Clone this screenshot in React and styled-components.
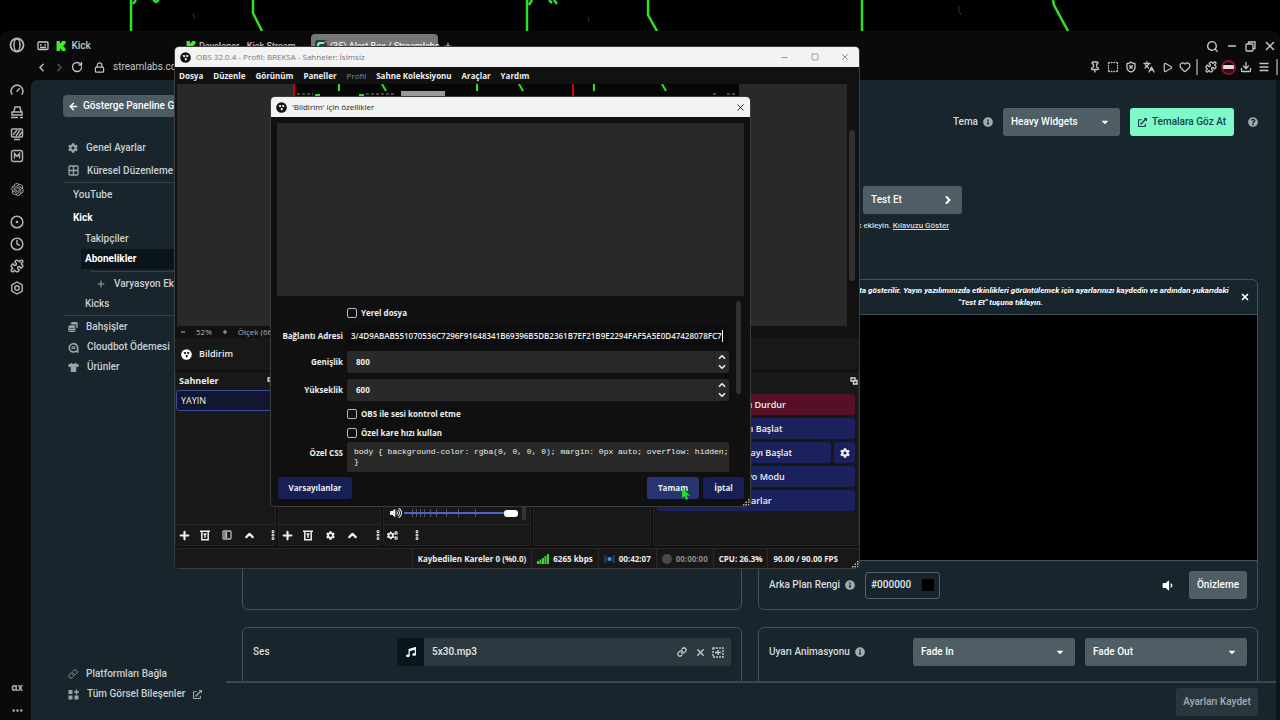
import { useEffect, useRef, useState } from 'react'
import styled, { createGlobalStyle, css } from 'styled-components'
import {
    ArrowLeft,
    ChevronDown,
    ChevronLeft,
    ChevronRight,
    ChevronUp,
    CircleDot,
    Clock,
    Download,
    Ellipsis,
    EllipsisVertical,
    Gauge,
    Heart,
    Languages,
    Link,
    Lock,
    Menu as MenuIcon,
    Minus,
    Pin,
    Play,
    Plus,
    Puzzle,
    RotateCw,
    Search,
    ShieldX,
    Square,
    SquareDashed,
    X,
} from 'lucide-react'
import {
    FaCaretDown,
    FaCog,
    FaCogs,
    FaCoins,
    FaExternalLinkAlt,
    FaInfoCircle,
    FaMusic,
    FaQuestionCircle,
    FaTshirt,
    FaVolumeDown,
    FaVolumeUp,
} from 'react-icons/fa'
import { RiOpenaiFill } from 'react-icons/ri'
import { SiKick } from 'react-icons/si'

const OBS_FONT = "'Open Sans', 'Noto Sans', sans-serif"
const PAGE_FONT = "Roboto, 'Noto Sans', sans-serif"

const SOURCE_URL =
    'https://streamlabs.com/alert-box/v3/4D9ABAB551070536C7296F91648341B69396B5DB2361B7EF21B9E2294FAF5A5E0D47428078FC7'

const MENUS = [
    'Dosya',
    'Düzenle',
    'Görünüm',
    'Paneller',
    'Profil',
    'Sahne Koleksiyonu',
    'Araçlar',
    'Yardım',
]

const SLIDER_TICKS = [8, 12, 16, 20, 26, 32, 42, 54, 71]

const GlobalStyle = createGlobalStyle`
    * {
        box-sizing: border-box;
    }

    body {
        margin: 0;
        background: #000;
        overflow: hidden;
    }

    button, input, select, textarea {
        font: inherit;
        color: inherit;
        margin: 0;
    }

    svg {
        flex: none;
        display: block;
    }
`

const Desktop = styled.div`
    position: relative;
    display: flex;
    flex-direction: column;
    height: 100vh;
    overflow: hidden;
    background: #000;
    font-family: ${PAGE_FONT};
    font-size: 10px;
    line-height: 14px;
    color: #e3e8ea;
`

const WallpaperStrip = styled.svg`
    height: 31px;
    width: 100%;
`

const PlainButton = styled.button`
    display: flex;
    align-items: center;
    justify-content: center;
    padding: 0;
    border: 0;
    background: none;
`

/* browser */

const Browser = styled.div`
    flex: 1;
    min-height: 0;
    display: flex;
    background: #0a0a0a;
    border-radius: 8px 8px 0 0;

    nav .lucide {
        stroke-width: 2.6;
    }
`

const Rail = styled.nav`
    width: 31px;
    padding: 7px 0 3px 3px;
    display: flex;
    flex-direction: column;
    align-items: center;
    gap: 8px;
    color: #b4b4b4;
`

const RailButton = styled(PlainButton)`
    height: 14px;
    font-size: 10px;
    font-weight: 700;
    margin-top: ${(props) => props.$before || 0}px;
`

const RailSpacer = styled.div`
    flex: 1;
`

const BrowserMain = styled.div`
    flex: 1;
    min-width: 0;
    display: flex;
    flex-direction: column;
`

const TabBar = styled.nav`
    height: 27px;
    padding: 3px 1px 0 2px;
    display: flex;
    align-items: center;
    color: #c8c8c8;
`

const Tab = styled.button`
    display: flex;
    align-items: center;
    gap: 3px;
    width: ${(props) => props.$width}px;
    height: 24px;
    padding: 0 4px;
    border: 0;
    border-radius: 4px;
    background: ${(props) => (props.$active ? '#777' : 'transparent')};
    color: ${(props) => (props.$active ? '#eee' : '#c4c4c4')};
    font-size: ${(props) => (props.$large ? 10 : 9)}px;
    font-weight: 500;
    white-space: nowrap;
    text-align: left;

    svg {
        color: #3df02c;
    }
`

const TabIcon = styled(PlainButton)`
    width: 19px;
    height: 20px;
`

const Grow = styled.div`
    flex: 1;
`

const AddressBar = styled.nav`
    height: 22px;
    padding: 0 0 4px 1px;
    display: flex;
    align-items: center;
    color: #c4c4c4;
`

const NavButton = styled(PlainButton)`
    width: 18px;
    height: 18px;
    color: ${(props) => (props.$dim ? '#555' : 'inherit')};
`

const Address = styled.span`
    padding: 0 8px;
`

const LockSlot = styled.span`
    padding-left: 8px;
`

const Divider = styled.span`
    width: 2px;
    height: 16px;
    margin: 0 4px 0 2px;
    background: #777;
`

const EndDivider = styled(Divider)`
    margin: 0 2px 0 3px;
`

const Avatar = styled.span`
    width: 15px;
    height: 15px;
    margin: 0 1px;
    border: 2px solid #8e1428;
    border-radius: 50%;
    background: linear-gradient(#150508 30%, #ddd 30% 60%, #400812 60%);
`

const Page = styled.div`
    flex: 1;
    min-height: 0;
    display: flex;
    background: #19252d;
    border-radius: 6px 0 0 0;
    border-right: 4px solid #0c171e;
`

/* streamlabs page */

const Aside = styled.aside`
    width: 195px;
    padding: 15px 0 16px 32px;
    display: flex;
    flex-direction: column;
`

const BackButton = styled(PlainButton)`
    height: 22px;
    padding: 0 5px;
    gap: 4px;
    justify-content: flex-start;
    background: #4c5a61;
    border-radius: 4px;
    color: #fff;
    font-size: 10px;
    font-weight: 500;
    white-space: nowrap;
`

const NavList = styled.nav`
    margin-top: 19px;
    display: flex;
    flex-direction: column;
`

const NavItem = styled.a`
    display: flex;
    align-items: center;
    gap: 8px;
    height: ${(props) => (props.$tall ? 23 : 20)}px;
    margin-left: ${(props) => (props.$active ? 18 : 0)}px;
    padding-left: ${(props) => props.$indent ?? 5}px;
    background: ${(props) => (props.$active ? '#09141b' : 'transparent')};
    color: ${(props) => (props.$strong ? '#fff' : '#c8ced1')};
    font-weight: ${(props) => (props.$strong ? 700 : 500)};
    text-decoration: none;
    white-space: nowrap;

    svg {
        color: #9ba5ab;
    }
`

const Rule = styled.hr`
    width: auto;
    margin: ${(props) => props.$space || 0}px 0 ${(props) => props.$space || 0}px ${(props) => props.$left || 0}px;
    border: 0;
    border-top: 1px solid #35424a;
`

const Content = styled.div`
    flex: 1;
    min-width: 0;
    display: flex;
    flex-direction: column;
`

const Scroller = styled.main`
    flex: 1;
    min-height: 0;
    overflow: hidden;
    padding: 28px 18px 0 16px;
`

const ThemeRow = styled.div`
    display: flex;
    align-items: center;
    justify-content: flex-end;
    gap: 10px;
`

const FieldLabel = styled.label`
    display: flex;
    align-items: center;
    gap: 5px;
    font-weight: 500;
    color: #d5dadc;
    white-space: nowrap;

    svg {
        color: #a3abaf;
    }
`

const SelectBox = styled.div`
    position: relative;
    width: ${(props) => props.$width}px;

    select {
        appearance: none;
        width: 100%;
        height: 28px;
        padding: 0 8px;
        border: 0;
        border-radius: 3px;
        background: #4f5e64;
        color: #fff;
        font-weight: 500;
    }

    svg {
        position: absolute;
        right: 10px;
        top: 9px;
        color: #fff;
        pointer-events: none;
    }
`

const PageButton = styled(PlainButton)`
    height: 28px;
    padding: 0 8px;
    gap: 5px;
    border-radius: 3px;
    background: #4f5e64;
    color: #fff;
    font-weight: 500;
    white-space: nowrap;
`

const ThemesButton = styled(PageButton)`
    width: 104px;
    background: #7dfac8;
    color: #17414a;
`

const HelpButton = styled(PlainButton)`
    padding: 0 0 0 4px;
    color: #a3abaf;
`

const TestArea = styled.section`
    width: 720px;
    margin-top: 50px;
    display: flex;
    flex-direction: column;
    align-items: flex-end;
    gap: 5px;
`

const TestButton = styled(PageButton)`
    width: 99px;
    justify-content: space-between;
`

const Hint = styled.p`
    margin: 0;
    padding-right: 13px;
    font-size: 8px;
    font-weight: 500;
    color: #d5dadc;

    a {
        color: inherit;
    }
`

const Cards = styled.div`
    display: grid;
    grid-template-columns: 1fr 1fr;
    gap: 17px 16px;
    margin-top: 46px;
`

const Card = styled.section`
    display: flex;
    flex-direction: column;
    border: 1px solid #43525a;
    border-radius: 6px;
    overflow: hidden;
`

const Notice = styled.div`
    display: flex;
    align-items: center;
    height: 35px;
    padding: 0 7px 0 2px;
    border-bottom: 1px solid #43525a;
    font-size: 8px;
    line-height: 12px;
    font-style: italic;
    font-weight: 700;
    text-align: center;
    color: #fff;

    p {
        flex: 1;
        margin: 0;
    }
`

const Stage = styled.div`
    height: 246px;
    background: #000;
    border-bottom: 1px solid #43525a;
`

const CardRow = styled.div`
    display: flex;
    align-items: center;
    gap: 10px;
    height: 48px;
    padding: 0 10px;
`

const ColorField = styled.div`
    display: flex;
    align-items: center;
    gap: 6px;
    height: 27px;
    padding: 0 5px;
    border: 1px solid #53626a;
    border-radius: 3px;

    input {
        width: 45px;
        padding: 0;
        border: 0;
        background: none;
        outline: none;
        font-weight: 500;
    }
`

const Swatch = styled.span`
    width: 12px;
    height: 12px;
    background: #000;
`

const VolumeButton = styled(PlainButton)`
    padding-right: 5px;
    color: #fff;
`

const FilePicker = styled.div`
    display: flex;
    align-items: center;
    width: 334px;
    height: 28px;
    margin-left: auto;
    padding-right: 4px;
    background: #2d3940;
    border-radius: 3px;
    overflow: hidden;
    font-weight: 500;

    button {
        width: 18px;
        color: #c4cacd;
    }
`

const NoteBox = styled.span`
    width: 27px;
    height: 100%;
    margin-right: 8px;
    display: flex;
    align-items: center;
    justify-content: center;
    background: #0a161d;
    color: #fff;
`

const Footer = styled.footer`
    height: 39px;
    padding: 0 18px;
    display: flex;
    align-items: center;
    justify-content: flex-end;
    border-top: 2px solid #3b4951;
`

const SaveButton = styled(PageButton)`
    width: 82px;
    background: #2a363d;
    color: #a5acb0;
`

/* desktop windows */

const windowFrame = css`
    position: absolute;
    display: flex;
    flex-direction: column;
    border: 1px solid #3c3c3c;
    border-radius: 5px;
    overflow: hidden;
    font-family: ${OBS_FONT};
    font-size: 8px;
    line-height: 12px;
    font-weight: 700;
    color: #eee;
`

const ObsWindow = styled.div`
    ${windowFrame}
    left: 174px;
    top: 46px;
    width: 686px;
    background: #111;
`

const Dialog = styled.div`
    ${windowFrame}
    left: 270px;
    top: 96px;
    width: 481px;
    background: #101010;
`

const TitleBar = styled.header`
    display: flex;
    align-items: center;
    gap: 5px;
    height: 20px;
    padding: 0 ${(props) => (props.$focused ? 4 : 2)}px 0 5px;
    background: #f3f3f3;
    color: ${(props) => (props.$focused ? '#222' : '#777')};

    h1 {
        flex: 1;
        margin: 0;
        font-size: 8px;
        font-weight: 400;
    }
`

const WindowButton = styled(PlainButton)`
    width: ${(props) => (props.$narrow ? 12 : 25)}px;
    height: 20px;
`

const MenuBar = styled.nav`
    display: flex;
    align-items: center;
    gap: 10px;
    height: 17px;
    padding: 0 4px;

    button {
        white-space: nowrap;
    }

    button:disabled {
        color: #8a8a8a;
        font-weight: 400;
    }
`

const PreviewArea = styled.div`
    display: flex;
    height: 242px;
    padding: 0 4px 0 2px;
    gap: 2px;
`

const Preview = styled.div`
    flex: 1;
    background: #29292a;
`

const CaptureStrip = styled.svg`
    width: 446px;
    height: 20px;
    margin-left: 116px;
`

const Thumb = styled.span`
    width: 6px;
    height: 151px;
    margin-top: 46px;
    border-radius: 3px;
    background: #303031;
`

const ZoomBar = styled.div`
    display: flex;
    align-items: center;
    gap: 10px;
    height: 12px;
    padding: 0 5px;
    font-weight: 400;
    color: #b5b5b5;
`

const SourceBar = styled.div`
    display: flex;
    align-items: center;
    gap: 7px;
    height: 32px;
    padding: 0 6px;
    background: #181818;
    font-size: 9px;
    font-weight: 600;
`

const Docks = styled.div`
    display: grid;
    grid-template-columns: 101px 103px 148px 118px 1fr;
    gap: 2px;
    margin-top: 2px;
`

const Dock = styled.section`
    display: flex;
    flex-direction: column;
    height: 174px;
    background: #181818;
    border: 1px solid #232323;
    border-top: 0;
    border-radius: 0 0 3px 3px;
`

const DockTitle = styled.h2`
    display: flex;
    align-items: center;
    justify-content: space-between;
    height: 18px;
    margin: 0;
    padding: 0 0 0 3px;
    font-size: 9px;
    font-weight: 700;
`

const SceneList = styled.ul`
    flex: 1;
    margin: 0;
    padding: 0;
    list-style: none;
`

const SceneItem = styled.li`
    display: flex;
    align-items: center;
    height: 21px;
    padding-left: 4px;
    background: #12162f;
    border: 1px solid #3c49a0;
    border-radius: 3px;
    font-size: 9px;
    font-weight: 400;
`

const DockTools = styled.div`
    display: flex;
    align-items: center;
    gap: 2px;
    height: 21px;
    margin-top: auto;
    border-top: 1px solid #2a2a2a;

    button {
        width: 20px;
    }

    button:first-child {
        width: 17px;
    }

    button:last-child {
        width: 4px;
        margin-left: auto;
    }
`

const MixerTools = styled(DockTools)`
    margin-top: 0;

    button:last-child {
        width: 27px;
        margin-left: 0;
    }
`

const VolumeRow = styled.label`
    display: flex;
    align-items: center;
    gap: 2px;
    height: 22px;
    margin-top: auto;
    padding: 0 4px 0 6px;
`

const SliderTrack = styled.span`
    position: relative;
    width: 114px;
    height: 12px;
    display: flex;
    align-items: center;

    svg {
        position: absolute;
        left: 0;
        top: 0;
    }

    input {
        position: relative;
        appearance: none;
        width: 100%;
        height: 12px;
        background: linear-gradient(#4c67c8, #4c67c8) center / 100% 2px no-repeat;
    }

    input::-webkit-slider-thumb {
        appearance: none;
        width: 14px;
        height: 7px;
        border-radius: 3px;
        background: #fff;
    }
`

const MixerThumb = styled.span`
    width: 4px;
    height: 14px;
    margin-left: auto;
    background: #333;
`

const Controls = styled.div`
    display: grid;
    grid-template-columns: 1fr 21px;
    gap: 3px;
    padding: 4px 3px 0;
`

const ControlButton = styled(PlainButton)`
    grid-column: ${(props) => (props.$wide ? '1 / -1' : 'auto')};
    height: 21px;
    border-radius: 3px;
    background: ${(props) => (props.$stop ? '#560f27' : '#1a215c')};
    font-size: 9px;
    font-weight: 600;
`

const StatusBar = styled.footer`
    display: flex;
    justify-content: flex-end;
    height: 20px;
    margin-top: 2px;
    padding-right: 16px;
    border-top: 1px solid #262626;
    background: #181818;
    position: relative;
`

const StatusCell = styled.span`
    display: flex;
    align-items: center;
    gap: 4px;
    padding: 0 5px;
    border-left: 1px solid #2a2a2a;
    color: ${(props) => (props.$dim ? '#8a8a8a' : '#eee')};
    white-space: nowrap;
`

const Grip = styled.svg`
    position: absolute;
    right: 0;
    bottom: 0;
`

/* source properties dialog */

const SourcePreview = styled.div`
    height: 173px;
    margin: 6px 6px 0;
    background: #29292a;
`

const FormArea = styled.div`
    display: flex;
    height: 176px;
    padding: 5px 9px 0 6px;
    justify-content: space-between;
    overflow: hidden;
`

const Form = styled.div`
    display: grid;
    grid-template-columns: 66px 382px;
    grid-template-rows: 23px 24px 28px 28px 19px 19px 40px;
    column-gap: 4px;
    align-items: center;
`

const FormLabel = styled.label`
    text-align: right;
    white-space: nowrap;
`

const TopFormLabel = styled(FormLabel)`
    align-self: start;
    padding-top: 5px;
`

const CheckLabel = styled.label`
    grid-column: 2;
    display: flex;
    align-items: center;
    gap: 4px;

    input {
        appearance: none;
        width: 10px;
        height: 10px;
        border: 1px solid #bbb;
        border-radius: 2px;
    }
`

const UrlField = styled.div`
    display: flex;
    align-items: center;
    height: 21px;
    padding: 0 6px 0 4px;
    background: #0d0d10;
    border-radius: 3px;

    input {
        flex: 1;
        min-width: 0;
        padding: 0;
        border: 0;
        outline: none;
        background: none;
        font-weight: 600;
    }
`

const Caret = styled.span`
    width: 1px;
    height: 12px;
    background: #fff;
`

const NumberField = styled.div`
    display: flex;
    align-items: center;
    height: 22px;
    border-radius: 3px;
    background: #29292a;

    input {
        flex: 1;
        min-width: 0;
        padding: 0 9px;
        border: 0;
        outline: none;
        background: none;
    }
`

const Stepper = styled.span`
    width: 15px;
    display: flex;
    flex-direction: column;
    align-items: center;
    border-left: 1px solid #1d1d1d;
`

const CssField = styled.textarea`
    height: 40px;
    padding: 5px 0 0 7px;
    border: 0;
    border-radius: 3px;
    outline: none;
    resize: none;
    overflow: hidden;
    white-space: pre;
    background: #29292a;
    font-family: 'Liberation Mono', monospace;
    font-size: 8px;
    line-height: 10px;
    font-weight: 400;
`

const FormThumb = styled.span`
    width: 5px;
    height: 93px;
    border-radius: 3px;
    background: #303031;
`

const DialogButtons = styled.div`
    display: flex;
    gap: 4px;
    padding: 5px 6px 7px 7px;
`

const DialogButton = styled(PlainButton)`
    position: relative;
    width: ${(props) => props.$width}px;
    height: 22px;
    border-radius: 3px;
    background: ${(props) => (props.$hover ? '#29356f' : '#181f55')};
`

const Pointer = styled.svg`
    position: absolute;
    left: 35px;
    top: 11px;
`

const OperaIcon = () => (
    <svg width="16" height="16" viewBox="0 0 16 16" fill="none" stroke="currentColor">
        <circle cx="8" cy="8" r="6.5" strokeWidth="1.8" />
        <ellipse cx="8" cy="8" rx="3" ry="6" strokeWidth="1.5" />
    </svg>
)

const WorkspaceIcon = () => (
    <svg width="12" height="10" viewBox="0 0 12 10" fill="none" stroke="currentColor" strokeWidth="1.3">
        <rect x="1" y="1" width="10" height="7.5" rx="1" />
        <path d="M3 4h1.6M7.4 4H9M3 6.5h6" />
    </svg>
)

const BoosterIcon = () => (
    <svg width="14" height="14" viewBox="0 0 14 14" fill="none" stroke="currentColor" strokeWidth="1.5">
        <path d="M4 6.5 5 2h5l1 4.5M2 7h10v3H2zM1 12.5h7M10 12.5h3" />
    </svg>
)

const MonitorIcon = () => (
    <svg width="14" height="14" viewBox="0 0 14 14" fill="none" stroke="currentColor" strokeWidth="1.4">
        <rect x="1.5" y="2" width="11" height="8" rx="1" />
        <path d="m3 8 4-5M6 9l4-6M9 9l3-4M4 12.5h6" />
    </svg>
)

const ModsIcon = () => (
    <svg width="14" height="14" viewBox="0 0 14 14" fill="none" stroke="currentColor" strokeWidth="1.4">
        <rect x="1.5" y="1.5" width="11" height="11" rx="2" />
        <path d="M4.5 9.5v-5L7 7.5l2.5-3v5" />
    </svg>
)

const HexSettingsIcon = () => (
    <svg width="14" height="14" viewBox="0 0 14 14" fill="none" stroke="currentColor" strokeWidth="1.4">
        <path d="M7 1 12.2 4v6L7 13 1.8 10V4z" />
        <circle cx="7" cy="7" r="2.2" />
    </svg>
)

const RestoreIcon = () => (
    <svg width="11" height="11" viewBox="0 0 11 11" fill="none" stroke="currentColor" strokeWidth="1.3">
        <rect x="1" y="3" width="7" height="7" rx="1" />
        <path d="M3.5 3V1H10v6.500H8" />
    </svg>
)

const TableIcon = () => (
    <svg width="11" height="11" viewBox="0 0 11 11" fill="none" stroke="currentColor" strokeWidth="1.3">
        <rect x="1" y="1" width="9" height="9" rx="1" />
        <path d="M5.5 1v9M1 5.5h9" />
    </svg>
)

const BotIcon = () => (
    <svg width="11" height="11" viewBox="0 0 11 11" fill="none" stroke="currentColor" strokeWidth="1.6">
        <path d="M8 9.2A4.2 4.2 0 1 1 9.7 5.8V9.8z" />
        <path d="M4 4.8h3v1.6H4z" strokeWidth="1" />
    </svg>
)

const WidgetsIcon = () => (
    <svg width="11" height="11" viewBox="0 0 11 11" fill="currentColor">
        <path d="M0.5 1h4v4h-4zM0.5 6.5h4v4h-4zM6.5 6.5h4v4h-4zM7.8 0.5h1.4v1.8H11v1.4H9.2v1.8H7.8V3.7H6V2.3h1.8z" />
    </svg>
)

const StreamlabsIcon = () => (
    <svg width="12" height="12" viewBox="0 0 12 12">
        <rect width="12" height="12" rx="2" fill="#0f4a46" />
        <path d="M2 10V5a3 3 0 0 1 3-3h4v2H5.500a1.500 1.500 0 0 0-1.500 1.500V10z" fill="#80f5d2" />
        <path d="M6 6h1.500v3H6zM9 6h1.500v3H9z" fill="#fff" />
        <circle cx="10.500" cy="2" r="1.500" fill="#f33" />
    </svg>
)

const GridDotsIcon = () => (
    <svg width="12" height="11" viewBox="0 0 12 11" fill="none" stroke="currentColor" strokeWidth="1.4">
        <path d="M1 1h10v9H1z" strokeDasharray="2 1" />
        <path d="M3 5.500h6M6 3v5" />
    </svg>
)

const TrashIcon = () => (
    <svg width="10" height="11" viewBox="0 0 10 11" fill="none" stroke="currentColor" strokeWidth="1.5">
        <path d="M0 1.300h10M1.800 2v7.800h6.400V2M5 4v3.800M3.500 4h3" />
    </svg>
)

const PopOutIcon = () => (
    <svg width="8" height="8" viewBox="0 0 8 8" fill="none" stroke="#ddd" strokeWidth="1.3">
        <path d="M1 1h4v3H1zM3.500 4v3H7V3.500H5" />
    </svg>
)

const FilterIcon = () => (
    <svg width="10" height="10" viewBox="0 0 10 10" fill="none" stroke="#bbb" strokeWidth="1.3">
        <rect x="1" y="1" width="8" height="8" rx="1" />
        <path d="M3 2v6M4.500 2v6" />
    </svg>
)

const BroadcastIcon = () => (
    <svg width="11" height="10" viewBox="0 0 11 10" fill="none" stroke="#2d5f93">
        <circle cx="5.500" cy="5" r="2" fill="#3f9bf0" stroke="none" />
        <path d="M2.800 2.300a4 4 0 0 0 0 5.400M8.200 2.300a4 4 0 0 1 0 5.400M1.200 1a6 6 0 0 0 0 8M9.800 1a6 6 0 0 1 0 8" />
    </svg>
)

const BarsIcon = () => (
    <svg width="12" height="10" viewBox="0 0 12 10" fill="#3bd530">
        <path d="M0 7h2v3H0zM2.500 5.500h2V10h-2zM5 4h2v6H5zM7.500 2h2v8h-2zM10 0h2v10h-2z" />
    </svg>
)

const ResizeGrip = () => (
    <Grip width="7" height="7" viewBox="0 0 7 7" fill="#bbb">
        <path d="M5 0h1.500v1.500H5zM5 2.500h1.500V4H5zM5 5h1.500v1.500H5zM2.500 2.500H4V4H2.500zM2.500 5H4v1.500H2.500zM0 5h1.500v1.500H0z" />
    </Grip>
)

const ObsLogo = ({ disc = '#111', blades = '#eee' }) => (
    <svg width="11" height="11" viewBox="0 0 11 11">
        <circle cx="5.500" cy="5.500" r="5.300" fill={disc} />
        <path
            d="M2.500 3.200 4.800 3 5.300 5 3.600 5.300zM6.200 2.800 8.600 3.500 7.800 5.300 6 4.600zM4.700 6 6.600 6 6.800 8 5 8.600z"
            fill={blades}
        />
    </svg>
)

const Wallpaper = () => (
    <WallpaperStrip viewBox="0 0 1280 31" preserveAspectRatio="none" fill="none" stroke="#2fe02a" strokeWidth="2.500">
        <path d="M131 0v31M133 4l3-4M153 0l3 2 3-2M527 0v31M529 5l3-5M549 0l3 3M554 0l3 4M862 0v31" />
        <path d="M253 0v13l9 18M648 0v15l9 16M1053 0l1 5 14 26" />
        <path d="M193 13l2 6M588 17l1 5M959 6v5l2 4" stroke="#333" strokeWidth="1" />
    </WallpaperStrip>
)

const BrowserWindow = () => (
    <Browser>
        <Rail>
            <RailButton aria-label="Opera"><OperaIcon /></RailButton>
            <RailButton aria-label="Hız" $before={23}><Gauge size={14} /></RailButton>
            <RailButton aria-label="Booster"><BoosterIcon /></RailButton>
            <RailButton aria-label="Ekran"><MonitorIcon /></RailButton>
            <RailButton aria-label="Mods"><ModsIcon /></RailButton>
            <RailButton aria-label="ChatGPT" $before={11}><RiOpenaiFill size={15} /></RailButton>
            <RailButton aria-label="Oynatıcı" $before={11}><CircleDot size={14} /></RailButton>
            <RailButton aria-label="Geçmiş"><Clock size={14} /></RailButton>
            <RailButton aria-label="Uzantılar"><Puzzle size={14} /></RailButton>
            <RailButton aria-label="Ayarlar"><HexSettingsIcon /></RailButton>
            <RailSpacer />
            <RailButton>ɑx</RailButton>
            <RailButton aria-label="Daha fazla"><Ellipsis size={13} /></RailButton>
        </Rail>
        <BrowserMain>
            <TabBar>
                <TabIcon aria-label="Çalışma alanı"><WorkspaceIcon /></TabIcon>
                <Tab $width={130} $large>
                    <SiKick size={10} />
                    &nbsp;Kick
                </Tab>
                <Tab $width={129}>
                    <SiKick size={10} />
                    Developer - Kick Stream
                </Tab>
                <Tab $width={127} $active>
                    <StreamlabsIcon />
                    (35) Alert Box / Streamlabs
                </Tab>
                <TabIcon aria-label="Yeni sekme"><Plus size={10} /></TabIcon>
                <Grow />
                <TabIcon aria-label="Ara"><Search size={13} /></TabIcon>
                <TabIcon aria-label="Küçült"><Minus size={12} /></TabIcon>
                <TabIcon aria-label="Geri yükle"><RestoreIcon /></TabIcon>
                <TabIcon aria-label="Kapat"><X size={14} /></TabIcon>
            </TabBar>
            <AddressBar>
                <NavButton aria-label="Geri"><ChevronLeft size={13} /></NavButton>
                <NavButton aria-label="İleri" $dim><ChevronRight size={13} /></NavButton>
                <NavButton aria-label="Yenile"><RotateCw size={12} /></NavButton>
                <LockSlot><Lock size={11} /></LockSlot>
                <Address>streamlabs.com</Address>
                <Grow />
                <NavButton aria-label="Sabitle"><Pin size={12} /></NavButton>
                <NavButton aria-label="Ekran görüntüsü"><SquareDashed size={12} /></NavButton>
                <NavButton aria-label="Kalkan"><ShieldX size={12} /></NavButton>
                <NavButton aria-label="Çeviri"><Languages size={12} /></NavButton>
                <NavButton aria-label="Oynat"><Play size={11} /></NavButton>
                <NavButton aria-label="Favori"><Heart size={12} /></NavButton>
                <Divider />
                <NavButton aria-label="Uzantılar"><Puzzle size={12} /></NavButton>
                <Avatar />
                <NavButton aria-label="İndirilenler"><Download size={12} /></NavButton>
                <NavButton aria-label="Menü"><MenuIcon size={12} /></NavButton>
                <EndDivider />
            </AddressBar>
            <Page>
                <PageAside />
                <PageContent />
            </Page>
        </BrowserMain>
    </Browser>
)

const PageAside = () => (
    <Aside>
        <BackButton>
            <ArrowLeft size={11} strokeWidth={3} />
            Gösterge Paneline Geri Dön
        </BackButton>
        <NavList>
            <NavItem href="#general" $tall>
                <FaCog size={10} />
                Genel Ayarlar
            </NavItem>
            <NavItem href="#global" $tall>
                <TableIcon />
                Küresel Düzenleme
            </NavItem>
            <Rule />
            <NavItem href="#youtube" $tall $indent={10}>YouTube</NavItem>
            <NavItem href="#kick" $tall $indent={10} $strong>Kick</NavItem>
            <NavItem href="#followers" $indent={22}>Takipçiler</NavItem>
            <NavItem href="#subs" $indent={4} $active $strong>Abonelikler</NavItem>
            <Rule $left={27} $space={2} />
            <NavItem href="#variation" $indent={33}>
                <Plus size={10} />
                Varyasyon Ekle
            </NavItem>
            <NavItem href="#kicks" $indent={22}>Kicks</NavItem>
            <Rule $space={1} />
            <NavItem href="#tips">
                <FaCoins size={10} />
                Bahşişler
            </NavItem>
            <NavItem href="#cloudbot">
                <BotIcon />
                Cloudbot Ödemesi
            </NavItem>
            <NavItem href="#merch">
                <FaTshirt size={11} />
                Ürünler
            </NavItem>
        </NavList>
        <Grow />
        <NavItem href="#platforms">
            <Link size={10} />
            Platformları Bağla
        </NavItem>
        <NavItem href="#widgets">
            <WidgetsIcon />
            Tüm Görsel Bileşenler
            <FaExternalLinkAlt size={9} />
        </NavItem>
    </Aside>
)

const PageContent = () => (
    <Content>
        <Scroller>
            <ThemeRow>
                <FieldLabel htmlFor="theme">
                    Tema <FaInfoCircle size={10} />
                </FieldLabel>
                <SelectBox $width={117}>
                    <select id="theme">
                        <option>Heavy Widgets</option>
                    </select>
                    <FaCaretDown size={10} />
                </SelectBox>
                <ThemesButton>
                    <FaExternalLinkAlt size={9} />
                    Temalara Göz At
                </ThemesButton>
                <HelpButton aria-label="Yardım"><FaQuestionCircle size={10} /></HelpButton>
            </ThemeRow>
            <TestArea>
                <TestButton>
                    Test Et
                    <ChevronRight size={12} strokeWidth={4} />
                </TestButton>
                <Hint>
                    Uyarıları görmek için yayın yazılımınıza kaynak ekleyin. <a href="#guide">Kılavuzu Göster</a>
                </Hint>
            </TestArea>
            <Cards>
                <Card />
                <Card>
                    <Notice>
                        <p>
                            Uyarı önizlemesi bu tarafta gösterilir. Yayın yazılımınızda etkinlikleri görüntülemek
                            için ayarlarınızı kaydedin ve ardından yukarıdaki
                            <br />
                            "Test Et" tuşuna tıklayın.
                        </p>
                        <PlainButton aria-label="Kapat"><X size={10} strokeWidth={4} /></PlainButton>
                    </Notice>
                    <Stage />
                    <CardRow>
                        <FieldLabel htmlFor="bg-color">
                            Arka Plan Rengi <FaInfoCircle size={10} />
                        </FieldLabel>
                        <ColorField>
                            <input id="bg-color" defaultValue="#000000" />
                            <Swatch />
                        </ColorField>
                        <Grow />
                        <VolumeButton aria-label="Ses"><FaVolumeDown size={13} /></VolumeButton>
                        <PageButton>Önizleme</PageButton>
                    </CardRow>
                </Card>
                <Card>
                    <CardRow>
                        <FieldLabel as="span">Ses</FieldLabel>
                        <FilePicker>
                            <NoteBox><FaMusic size={10} /></NoteBox>
                            5x30.mp3
                            <Grow />
                            <PlainButton aria-label="Bağlantı"><Link size={10} strokeWidth={3} /></PlainButton>
                            <PlainButton aria-label="Sil"><X size={11} strokeWidth={3} /></PlainButton>
                            <PlainButton aria-label="Galeri"><GridDotsIcon /></PlainButton>
                        </FilePicker>
                    </CardRow>
                    <CardRow />
                </Card>
                <Card>
                    <CardRow>
                        <FieldLabel htmlFor="anim-in">
                            Uyarı Animasyonu <FaInfoCircle size={10} />
                        </FieldLabel>
                        <Grow />
                        <SelectBox $width={162}>
                            <select id="anim-in">
                                <option>Fade In</option>
                            </select>
                            <FaCaretDown size={10} />
                        </SelectBox>
                        <SelectBox $width={162}>
                            <select aria-label="Çıkış animasyonu">
                                <option>Fade Out</option>
                            </select>
                            <FaCaretDown size={10} />
                        </SelectBox>
                    </CardRow>
                    <CardRow />
                </Card>
            </Cards>
        </Scroller>
        <Footer>
            <SaveButton>Ayarları Kaydet</SaveButton>
        </Footer>
    </Content>
)

const Obs = () => (
    <ObsWindow>
        <TitleBar>
            <ObsLogo />
            <h1>OBS 32.0.4 - Profil: BREKSA - Sahneler: İsimsiz</h1>
            <WindowButton aria-label="Küçült"><Minus size={9} /></WindowButton>
            <WindowButton aria-label="Büyüt"><Square size={8} /></WindowButton>
            <WindowButton aria-label="Kapat"><X size={10} /></WindowButton>
        </TitleBar>
        <MenuBar>
            {MENUS.map((menu) => (
                <PlainButton key={menu} disabled={menu === 'Profil'}>
                    {menu}
                </PlainButton>
            ))}
        </MenuBar>
        <PreviewArea>
            <Preview>
                <CaptureStrip viewBox="0 0 446 20">
                    <rect width="446" height="20" fill="#060606" />
                    <path d="M46 0v7M184 0v7M301 0v7" stroke="#2fe02a" strokeWidth="2" />
                    <path d="M89 0l4 7M226 0l4 7M369 0l4 7" stroke="#2fe02a" strokeWidth="2" />
                    <path d="M108 7h44v8h-44z" fill="#999" />
                    <path d="M22 10h5v4h-5zM66 10h5v4h-5z" fill="#2fe02a" />
                    <path d="M4 10h16M73 10h28M420 10h4M434 10h8" stroke="#888" strokeDasharray="3 2" />
                    <path d="M1 0v20M280 0v20" stroke="#d00000" strokeWidth="2" />
                </CaptureStrip>
            </Preview>
            <Thumb />
        </PreviewArea>
        <ZoomBar>
            <Minus size={6} strokeWidth={4} />
            <span>52%</span>
            <Plus size={6} strokeWidth={4} />
            <span>Ölçek (66%)</span>
        </ZoomBar>
        <SourceBar>
            <ObsLogo disc="#fff" blades="#181818" />
            Bildirim
        </SourceBar>
        <Docks>
            <Dock>
                <DockTitle>
                    Sahneler
                    <PopOutIcon />
                </DockTitle>
                <SceneList>
                    <SceneItem>YAYIN</SceneItem>
                </SceneList>
                <DockTools>
                    <PlainButton aria-label="Ekle"><Plus size={13} strokeWidth={4} /></PlainButton>
                    <PlainButton aria-label="Kaldır"><TrashIcon /></PlainButton>
                    <PlainButton aria-label="Filtreler"><FilterIcon /></PlainButton>
                    <PlainButton aria-label="Yukarı"><ChevronUp size={13} strokeWidth={4} /></PlainButton>
                    <PlainButton aria-label="Diğer"><EllipsisVertical size={12} strokeWidth={4} /></PlainButton>
                </DockTools>
            </Dock>
            <Dock>
                <DockTitle />
                <DockTools>
                    <PlainButton aria-label="Ekle"><Plus size={13} strokeWidth={4} /></PlainButton>
                    <PlainButton aria-label="Kaldır"><TrashIcon /></PlainButton>
                    <PlainButton aria-label="Özellikler"><FaCog size={9} /></PlainButton>
                    <PlainButton aria-label="Yukarı"><ChevronUp size={13} strokeWidth={4} /></PlainButton>
                    <PlainButton aria-label="Diğer"><EllipsisVertical size={12} strokeWidth={4} /></PlainButton>
                </DockTools>
            </Dock>
            <Dock>
                <VolumeRow>
                    <FaVolumeUp size={12} />
                    <SliderTrack>
                        <svg width="114" height="12" stroke="#556" strokeWidth="1">
                            {SLIDER_TICKS.map((x) => (
                                <path key={x} d={`M${x}.500 2v8`} />
                            ))}
                        </svg>
                        <input type="range" aria-label="Ses düzeyi" defaultValue="100" />
                    </SliderTrack>
                    <MixerThumb />
                </VolumeRow>
                <MixerTools>
                    <PlainButton aria-label="Gelişmiş"><FaCogs size={11} /></PlainButton>
                    <PlainButton aria-label="Diğer"><EllipsisVertical size={12} strokeWidth={4} /></PlainButton>
                </MixerTools>
            </Dock>
            <Dock />
            <Dock>
                <DockTitle>
                    <span />
                    <PopOutIcon />
                </DockTitle>
                <Controls>
                    <ControlButton $wide $stop>Yayını Durdur</ControlButton>
                    <ControlButton $wide>Kaydı Başlat</ControlButton>
                    <ControlButton>Sanal Kamerayı Başlat</ControlButton>
                    <ControlButton aria-label="Sanal kamera ayarları"><FaCog size={10} /></ControlButton>
                    <ControlButton $wide>Stüdyo Modu</ControlButton>
                    <ControlButton $wide>Ayarlar</ControlButton>
                </Controls>
            </Dock>
        </Docks>
        <StatusBar>
            <StatusCell>Kaybedilen Kareler 0 (%0.0)</StatusCell>
            <StatusCell>
                <BarsIcon />
                6265 kbps
            </StatusCell>
            <StatusCell>
                <BroadcastIcon />
                00:42:07
            </StatusCell>
            <StatusCell $dim>
                <svg width="10" height="10"><circle cx="5" cy="5" r="5" fill="#4a4a4a" /></svg>
                00:00:00
            </StatusCell>
            <StatusCell>CPU: 26.3%</StatusCell>
            <StatusCell>90.00 / 90.00 FPS</StatusCell>
            <ResizeGrip />
        </StatusBar>
    </ObsWindow>
)

const SizeInput = ({ id, label, initial }) => {
    const [value, setValue] = useState(initial)

    return (
        <>
            <FormLabel htmlFor={id}>{label}</FormLabel>
            <NumberField>
                <input id={id} value={value} onChange={(e) => setValue(Number(e.target.value) || 0)} />
                <Stepper>
                    <PlainButton aria-label={`${label} artır`} onClick={() => setValue(value + 1)}>
                        <ChevronUp size={10} strokeWidth={4} />
                    </PlainButton>
                    <PlainButton aria-label={`${label} azalt`} onClick={() => setValue(value - 1)}>
                        <ChevronDown size={10} strokeWidth={4} />
                    </PlainButton>
                </Stepper>
            </NumberField>
        </>
    )
}

const PropertiesDialog = () => {
    const urlRef = useRef(null)

    // keep the end of the long address in view
    useEffect(() => {
        urlRef.current.scrollLeft = urlRef.current.scrollWidth
    }, [])

    return (
        <Dialog role="dialog" aria-label="Özellikler">
            <TitleBar $focused>
                <ObsLogo />
                <h1>'Bildirim' için özellikler</h1>
                <WindowButton $narrow aria-label="Kapat"><X size={11} /></WindowButton>
            </TitleBar>
            <SourcePreview />
            <FormArea>
                <Form>
                    <CheckLabel>
                        <input type="checkbox" />
                        Yerel dosya
                    </CheckLabel>
                    <FormLabel htmlFor="url">Bağlantı Adresi</FormLabel>
                    <UrlField>
                        <input id="url" ref={urlRef} defaultValue={SOURCE_URL} />
                        <Caret />
                    </UrlField>
                    <SizeInput id="width" label="Genişlik" initial={800} />
                    <SizeInput id="height" label="Yükseklik" initial={600} />
                    <CheckLabel>
                        <input type="checkbox" />
                        OBS ile sesi kontrol etme
                    </CheckLabel>
                    <CheckLabel>
                        <input type="checkbox" />
                        Özel kare hızı kullan
                    </CheckLabel>
                    <TopFormLabel htmlFor="css">Özel CSS</TopFormLabel>
                    <CssField
                        id="css"
                        spellCheck={false}
                        defaultValue={
                            'body { background-color: rgba(0, 0, 0, 0); margin: 0px auto; overflow: hidden;\n}'
                        }
                    />
                </Form>
                <FormThumb />
            </FormArea>
            <DialogButtons>
                <DialogButton $width={74}>Varsayılanlar</DialogButton>
                <Grow />
                <DialogButton $width={52} $hover>
                    Tamam
                    <Pointer width="9" height="13" viewBox="0 0 9 13" fill="#22e02a">
                        <path d="M0 0v10l2.500-2L4 12l2-1-1.500-3.500H8z" />
                    </Pointer>
                </DialogButton>
                <DialogButton $width={41}>İptal</DialogButton>
            </DialogButtons>
            <ResizeGrip />
        </Dialog>
    )
}

const App = () => {
    return (
        <Desktop>
            <GlobalStyle />
            <Wallpaper />
            <BrowserWindow />
            <Obs />
            <PropertiesDialog />
        </Desktop>
    )
}

export default App
